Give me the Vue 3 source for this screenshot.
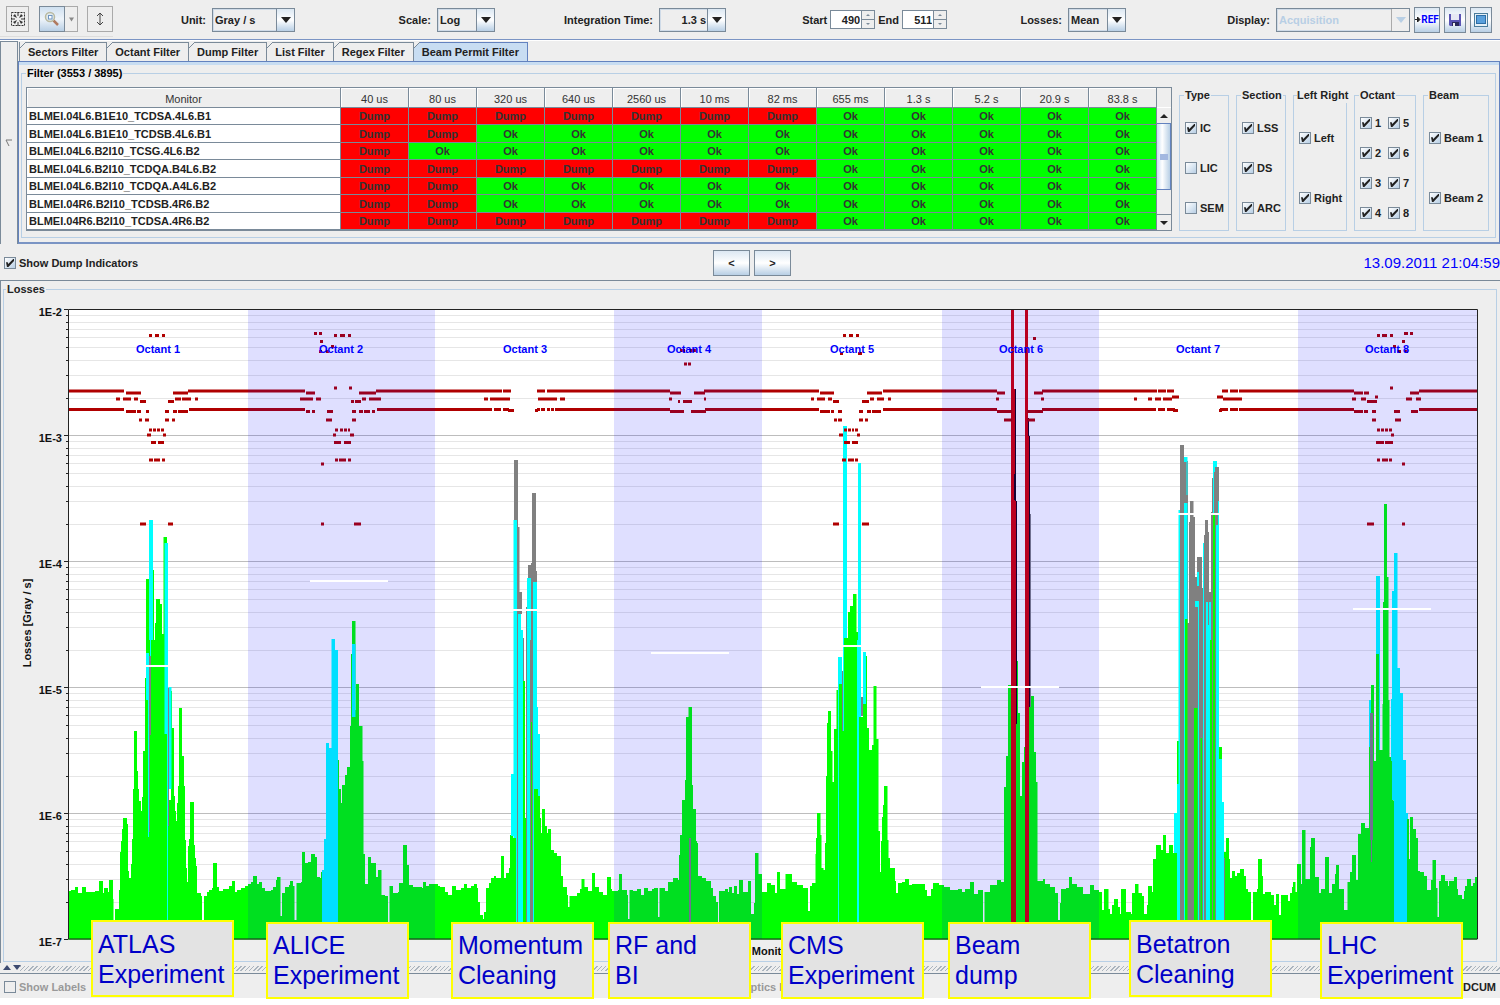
<script setup>
import { ref, computed } from 'vue'

const tabs = ['Sectors Filter', 'Octant Filter', 'Dump Filter', 'List Filter', 'Regex Filter', 'Beam Permit Filter']
const activeTab = ref('Beam Permit Filter')

const periods = ['40 us', '80 us', '320 us', '640 us', '2560 us', '10 ms', '82 ms', '655 ms', '1.3 s', '5.2 s', '20.9 s', '83.8 s']
// dumps: how many of the leading integration periods request a dump
const monitors = [
  { name: 'BLMEI.04L6.B1E10_TCDSA.4L6.B1', dumps: 7 },
  { name: 'BLMEI.04L6.B1E10_TCDSB.4L6.B1', dumps: 2 },
  { name: 'BLMEI.04L6.B2I10_TCSG.4L6.B2', dumps: 1 },
  { name: 'BLMEI.04L6.B2I10_TCDQA.B4L6.B2', dumps: 7 },
  { name: 'BLMEI.04L6.B2I10_TCDQA.A4L6.B2', dumps: 2 },
  { name: 'BLMEI.04R6.B2I10_TCDSB.4R6.B2', dumps: 2 },
  { name: 'BLMEI.04R6.B2I10_TCDSA.4R6.B2', dumps: 7 }
]

const groups = ref([
  { title: 'Type', cls: 'narrow', items: [['IC', true], ['LIC', false], ['SEM', false]] },
  { title: 'Section', cls: 'narrow', items: [['LSS', true], ['DS', true], ['ARC', true]] },
  { title: 'Left Right', cls: 'medium', items: [['Left', true], ['Right', true]] },
  { title: 'Octant', cls: 'two', items: [['1', true], ['5', true], ['2', true], ['6', true], ['3', true], ['7', true], ['4', true], ['8', true]] },
  { title: 'Beam', cls: 'wide', items: [['Beam 1', true], ['Beam 2', true]] }
])

const showDump = ref(true)
const start = ref(490)
const end = ref(511)

// ---- chart ----
const TOP = 309.5
const DECADE = 126
const BASE = TOP + DECADE * 5
const decades = [0, 1, 2, 3, 4, 5].map(i => ({ label: `1E-${i + 2}`, y: TOP + DECADE * i }))
const minors = computed(() => {
  const out = []
  for (let d = 1; d <= 5; d++) {
    for (let m = 2; m <= 9; m++) out.push(Math.round(TOP + DECADE * d - DECADE * Math.log10(m)) + 0.5)
  }
  return out
})
const bands = [[248, 435], [614, 762], [942, 1099], [1298, 1477]]
const octants = [158, 341, 525, 689, 852, 1021, 1198, 1387].map((x, i) => ({ x, name: `Octant ${i + 1}` }))

const profile = `68,891 71,890 75,887 78,893 82,887 86,892 95,891 99,881 103,893 104,888 108,892 109,880 113,899 113.5,922 115,909
119,890 120,852 121,841 122,829 123,818 127,824 128,871 129,878 131,864 132,839 133,789 134,731 137,771 138,789 139,801 141,811
142,797 143,751 145,678 146,579 149,570 154,640 155,623 156,599 160,604 162,634 163.5,537 167,687 168,800 171,691 172,728 174,796
175,811 176,821 177,803 178,786 179,708 182,756 184,786 185,840 186,868 187,882 188,846 189,839 190,802 194,845 195,858 196,866
197,893 201,896 202,922 204,896 207,892 209,890 212,888 213,863 217,887 219,891 223,889 229,886 232,881 235,892 237,890 241,888
245,886 248,884 251,882 253,876 257,884 259,882 262,888 265,891 271,890 273,887 276,880 277,877 280.5,916 282,893 285,887 289,885
290,881 293,886 294.5,920 296.5,883 301,882 302,852 305,863 308,862 311,854 315,857 317,877 320,878 321,872 323,870 338,760
339,789 341,803 342,785 345,775 347,767 350,726 351,654 352,621 355.5,710 356,684 359,726 362.5,761 363.5,854 365,884 368,857
371,863 376,877 378,870 381.5,895 385,896 388,922 389.5,886 393,893 398,892 399,883 403,845 407,865 409,885 413,887 422,888
423,882 426,886 429,884 438,886 440,887 445,892 448,895 452,886 456,890 461,888 464,884 467,888 471,886 474,884 477,888 478,902
480,915 483,919 484,912 486,888 489,883 491,878 494,876 496,878 501,856 504,878 506,873 509,868 510,835 513,838 516,838 523,681
525,818 526,790 531,722 534,789 538,796 540,818 541,833 542,809 545,826 547,833 548,829 551,850 554,853 557,856 561,876 563,887
567,895 568,907 569.5,896 577,893 580,889 581.5,879 584.5,887 588,891 592,873 595,887 599,892 603,895 607,877 611,889 612,891
618,890 619,874 622,890 627,895 628,919 629.5,890 633,891 637,889 641,895 644,888 648,891 652,889 654,888 658,917 659.5,888
665,891 668,882 673,878 678,880 679,855 680,835 682,800 685,780 686,717 688.5,707 692,785 693,809 696,841 697,843 698,876 702,878
706,881 711,888 713,896 716,902 718,922 719,891 725,889 728,892 729,887 732,893 734,886 737,894 739,880 743,892 748,881 751,914
754,903 755,853 758.5,874 762,892 767,883 771,885 775,893 777,872 780,889 785.5,874 792,882 797,885 803,888 808,911 810,886
812,883 815.5,854 816,838 817,813 820.5,835 821.5,868 823.5,870 825,843 826,776 827,723 828,711 831,751 832.5,782 834,729
836.5,690 839,684 842,731 844,638 848,612 850,606 853,594 856.5,632 858,717 863,704 866,656 867,728 869,750 872,745 873.5,686
876.5,739 878.5,831 880,872 881,841 882,817 883,805 884,786 887.5,840 888.5,858 890,868 895,881 896,893 898,883 902,882 905,879
909,885 912,884 925,890 927,896 931,889 933,883 939,885 944,887 950,890 958,889 962,892 965,889 970,882 974,894 978,890 983,922
984.5,892 990,885 997,880 1001,882 1004,787 1006,756 1008,685 1012,700 1016,661 1018,713 1020,796 1022,762 1024,747 1025,696
1034,752 1036,782 1037.5,881 1043,879 1045,884 1050,887 1055,893 1058,920 1060,903 1061,889 1066,888 1069,877 1072,884 1077,887
1083,894 1090,885 1094,890 1099,892 1102,910 1104,889 1108.5,909 1110,914 1112,905 1114,899 1118,907 1120,914 1121,889 1126,912
1131,914 1132,893 1135,884 1138.5,893 1142,896 1144,914 1147,905 1148,886 1152,892 1153,859 1156,845 1161,850 1163,835 1166,853
1169,845 1173,853 1177,741 1180,747 1218,747 1222,835 1224,852 1226,838 1229,859 1230,878 1232,871 1235,876 1237,873 1240,869
1244,876 1246,889 1248,892 1251,922 1253,892 1257,889 1258,859 1262,876 1263,894 1265,892 1271,895 1274,905 1276,894 1279,915
1281,895 1288,901 1290,893 1292,887 1293,882 1295.5,892 1297,864 1301,884 1302,830 1305.5,879 1310,847 1311,838 1315,877
1319,893 1321,889 1325,857 1329,893 1332,884 1335,874 1336,865 1339,889 1344,910 1347.5,882 1350,872 1352,855 1356,880 1358,834
1361,823 1365,828 1369,747 1371,685 1374,761 1376,654 1379,737 1380,750 1382.5,704 1383,602 1384,504 1387,577 1388.5,700
1389.5,757 1392,761 1393.5,801 1406,819 1409,859 1410,817 1413,829 1416,838 1418,871 1420,872 1424,876 1427,890 1431,880
1432.5,860 1436,888 1437.5,917 1439,881 1441,875 1445,881 1448,886 1449,881 1454,877 1457,889 1458,895 1462,899 1464,891
1465,886 1467,879 1471,886 1473,883 1475,877`
const profilePath = computed(() => {
  const pts = profile.trim().split(/\s+/).map(p => p.split(','))
  let d = `M68 ${BASE}`
  for (const [x, y] of pts) d += `H${x}V${y}`
  return `${d}H1477V${BASE}Z`
})

// [colour, x1, x2, top, bottom]; c = cyan, s = grey, g = green, r = dump red, k = black
const B = BASE
const bars = [
  ['c', 149, 153, 520, 640], ['c', 146, 149, 653, 700], ['c', 148, 149, 700, 837], ['c', 150, 151, 640, 656], ['s', 149, 151, 656, 735], ['s', 149, 150, 735, 832],
  ['c', 164.5, 168, 543, 734], ['c', 167, 168, 734, B], ['c', 169, 171.5, 687, 789], ['s', 168, 169, 688, 826],
  ['c', 322, 325, 870, B], ['c', 324, 326, 839, B], ['c', 326, 329, 743, B], ['c', 328, 332, 748, B], ['c', 331.5, 335, 639, B], ['c', 335, 338, 650, B], ['c', 352, 355.5, 644, 717],
  ['c', 511, 514, 774, 836], ['s', 514, 518, 460, B], ['c', 513.5, 517, 520, B], ['s', 517, 519.5, 527, B], ['s', 519, 522, 592, 614], ['c', 518, 521, 614, B], ['c', 520, 523, 630, B], ['s', 523, 524, 638, 681],
  ['s', 526, 527, 607, B], ['s', 528, 532, 565, 578], ['s', 531, 534, 563, B], ['s', 532, 536, 493, 582], ['s', 535, 537, 571, 582], ['c', 527, 530, 578, B], ['c', 530, 531, 578, 640], ['s', 530, 532, 640, B], ['g', 531, 532, 722, 850], ['c', 533, 537, 582, 789], ['c', 536, 538, 707, 789], ['c', 538, 540, 734, 796], ['c', 533, 534, 789, B], ['g', 512, 516, 838, B],
  ['s', 689, 691, 838, B],
  ['c', 838, 842, 657, 684], ['c', 838, 839, 684, B], ['s', 842, 843, 671, 731], ['c', 843, 847, 426, 638], ['c', 843, 844, 638, 731], ['c', 858, 861, 463, 717], ['c', 857, 859, 640, B], ['s', 861, 863, 697, 716], ['c', 863, 866, 652, 704],
  ['r', 1011, 1014, 310, B], ['r', 1014, 1016, 389, B], ['k', 1015, 1016, 389, 501], ['k', 1014, 1016, 474, 500], ['k', 1016, 1017, 501, 724],
  ['r', 1025, 1028, 310, B], ['r', 1028, 1029, 418, B], ['k', 1028, 1029, 418, 436], ['k', 1029, 1030, 436, 707], ['s', 1030, 1031, 514, 707],
  ['c', 1174, 1177, 813, 853], ['c', 1177, 1180, 784, B], ['c', 1178.5, 1181, 510, B], ['s', 1180, 1184, 445, B], ['s', 1184, 1188, 461, B], ['c', 1184, 1187, 457, 462], ['c', 1186.5, 1187.5, 457, 495], ['c', 1184, 1187.5, 503, 640], ['c', 1184, 1185, 640, B],
  ['s', 1187, 1191, 623, B], ['g', 1185, 1187.5, 619, B], ['s', 1189, 1191, 522, B], ['s', 1190, 1193.5, 501, B], ['s', 1193, 1195, 517, B], ['s', 1194, 1199, 577, B], ['s', 1197, 1202, 557, B], ['c', 1197, 1199, 572, 586], ['c', 1195, 1199, 601, 607], ['c', 1198, 1199, 607, B], ['g', 1194, 1197.5, 708, B],
  ['g', 1200.5, 1202, 738, B], ['s', 1202, 1204, 588, B], ['c', 1203, 1205, 543, B], ['s', 1204, 1206, 535, B], ['s', 1205, 1208, 520, B], ['s', 1207, 1209, 532, 602], ['s', 1209, 1211, 592, 602], ['c', 1206, 1211, 602, B], ['s', 1208, 1209, 532, 625],
  ['s', 1211, 1213, 512, B], ['s', 1212, 1214, 478, B], ['g', 1210, 1212, 640, B], ['c', 1213, 1217, 461, B], ['s', 1215, 1219, 467, 525], ['c', 1218, 1219, 501, B], ['c', 1216, 1219, 525, B], ['s', 1214, 1216, 472, B], ['g', 1213, 1215, 515, B], ['c', 1219, 1222, 759, B], ['c', 1222, 1224, 802, B], ['s', 1224, 1225, 858, B],
  ['c', 1369, 1371, 700, 747], ['s', 1370, 1373, 713, 840], ['s', 1371, 1372, 840, 862], ['c', 1376, 1380, 576, 654], ['c', 1379, 1380, 654, 750],
  ['c', 1391, 1393, 699, 761], ['c', 1392, 1394, 591, 800], ['c', 1394, 1397.5, 553, B], ['c', 1397, 1400, 668, B], ['c', 1399.5, 1403, 693, B], ['c', 1403, 1406, 760, B], ['c', 1406, 1408, 813, 819], ['c', 1406, 1407, 819, B]
]

// dump thresholds: height -> horizontal extents
const thresholds = [
  [333.5, '314-317 319-322 1404-1408 1410-1413'],
  [335.5, '149-152 155-159 162-165 334-337 340-345 348-351 843-846 849-853 856-859 1377-1380 1382-1387 1390-1393'],
  [338.5, '1033-1036'],
  [341.5, '320-323 1402-1405'],
  [346.5, '331-334 1393-1396'],
  [350.5, '680-685 690-697'],
  [351.5, '319-322 326-329 1397-1401 1405-1408'],
  [353.5, '840-843 858-862'],
  [364, '684-687 688-691'],
  [388, '334-337 349-352 1390-1393'],
  [391, '68-124 188-305 376-502 503-511 537-545 547-670 704-819 883-997 1042-1157 1158-1166 1167-1174 1222-1228 1230-1238 1239-1354 1419-1477'],
  [393, '126-141 173-188 306-315 359-376 670-681 694-705 820-834 867-882 997-1005 1034-1043 1354-1363 1364-1369 1410-1419'],
  [397, '1172-1179 1217-1223 1375-1378'],
  [399, '116-120 123-131 134-138 175-181 182-191 195-198 300-313 316-321 362-366 369-381 484-488 490-510 538-557 560-565 669-672 704-706 811-814 817-825 828-832 870-874 877-884 888-891 996-999 1041-1044 1134-1137 1148-1152 1155-1161 1163-1172 1223-1242 1352-1356 1361-1366 1406-1412 1416-1421'],
  [401.5, '140-146 168-174 351-354 355-361 678-680 683-692 833-839 862-869 1367-1377'],
  [409.5, '68-124 189-305 377-492 494-501 503-509 537-540 541-545 547-550 551-554 555-670 705-819 883-997 1042-1156 1158-1165 1167-1175 1220-1228 1230-1238 1239-1354 1419-1477'],
  [410.5, '508-514 535-538 1173-1178 1219-1222'],
  [411.5, '126-136 137-141 146-149 165-169 173-177 178-188 306-310 312-315 327-333 352-356 359-363 364-370 372-375 670-684 691-706 820-830 831-834 838-842 859-863 867-871 872-881 997-1012 1027-1043 1354-1363 1364-1368 1372-1376 1394-1400 1411-1418'],
  [420, '139-142 145-149 165-169 172-175 326-332 352-356 834-837 838-842 859-863 865-868 1004-1012 1027-1035 1372-1376 1395-1401'],
  [430, '149-152 153-156 157-160 161-164 335-338 340-343 344-347 348-350 844-847 848-851 852-854 855-858 1377-1380 1381-1384 1385-1388 1389-1392'],
  [435, '147-151 163-166 333-336 350-354 839-843 857-860 1391-1394'],
  [442.5, '151-156 158-164 334-341 344-351 844-850 852-858 1376-1384 1385-1393'],
  [460, '149-153 154-160 162-165 335-338 339-346 348-351 842-846 848-854 855-858 1377-1380 1382-1388 1389-1392'],
  [464, '321-324 1402-1405'],
  [524, '140-146 168-173 321-324 354-361 833-839 862-869 1367-1374 1402-1405']
]
const thresholdPath = computed(() =>
  thresholds.map(([y, segs]) => segs.split(' ').map(s => {
    const [a, b] = s.split('-')
    return `M${a} ${y}H${b}`
  }).join('')).join('')
)
const means = [[119, 666], [310, 581], [495, 610], [651, 653], [813, 646], [981, 687], [1159, 514], [1353, 609]]

const callouts = [
  { text: ['ATLAS', 'Experiment'], x: 91, cls: 'raised' },
  { text: ['ALICE', 'Experiment'], x: 266, cls: '' },
  { text: ['Momentum', 'Cleaning'], x: 451, cls: '' },
  { text: ['RF and', 'BI'], x: 608, cls: '' },
  { text: ['CMS', 'Experiment'], x: 781, cls: '' },
  { text: ['Beam', 'dump'], x: 948, cls: '' },
  { text: ['Betatron', 'Cleaning'], x: 1129, cls: 'raised' },
  { text: ['LHC', 'Experiment'], x: 1320, cls: '' }
]
</script>

<template>
  <div class="page">
    <header class="toolbar">
      <div class="tools">
        <button class="tool flat" aria-label="Fit to window">
          <svg width="16" height="16" viewBox="0 0 16 16"><rect x="1.5" y="1.5" width="13" height="13" fill="none" stroke="#333" stroke-dasharray="2 1" /><path d="M5 3l2 4-4-2zM11 3l-2 4 4-2zM5 13l2-4-4 2zM11 13l-2-4 4 2z" fill="#333" /><path d="M8 1v4M8 15v-4M1 8h4M15 8h-4" stroke="#333" fill="none" /></svg>
        </button>
        <div class="split">
          <button class="tool pressed" aria-label="Zoom">
            <svg width="16" height="16" viewBox="0 0 16 16"><path d="M9.5 9.5l4.500 4.500" stroke="#b07a60" stroke-width="2.500" /><circle cx="6" cy="6" r="4.500" fill="#dfe9ee" stroke="#b9b9a0" stroke-width="1.500" /><rect x="4.500" y="4.500" width="3.500" height="3.500" fill="#fff" stroke="#6f95c0" /></svg>
          </button>
          <button class="tool drop" aria-label="Zoom options"><svg width="5" height="5" viewBox="0 0 6 5"><path d="M0 0h6L3 5z" fill="#888" /></svg></button>
        </div>
        <button class="tool flat tall" aria-label="Fit vertically">
          <svg width="8" height="14" viewBox="0 0 8 14"><path d="M4 1v12M1 4l3-3 3 3M1 10l3 3 3-3" fill="none" stroke="#444" /></svg>
        </button>
      </div>
      <div class="field">
        <label for="unit">Unit:</label>
        <span class="combo w83"><select id="unit"><option>Gray / s</option></select></span>
      </div>
      <div class="field">
        <label for="scale">Scale:</label>
        <span class="combo w58"><select id="scale"><option>Log</option></select></span>
      </div>
      <div class="field">
        <label for="integration">Integration Time:</label>
        <span class="combo w67 right"><select id="integration"><option>1.3 s</option></select></span>
      </div>
      <div class="field tight">
        <label for="start">Start</label>
        <span class="spinner"><input id="start" v-model="start" type="text"><span class="arrows"><button class="up" aria-label="Increase start" @click="start++"></button><button class="down" aria-label="Decrease start" @click="start--"></button></span></span>
        <label for="end">End</label>
        <span class="spinner"><input id="end" v-model="end" type="text"><span class="arrows"><button class="up" aria-label="Increase end" @click="end++"></button><button class="down" aria-label="Decrease end" @click="end--"></button></span></span>
      </div>
      <div class="field">
        <label for="losses">Losses:</label>
        <span class="combo w58"><select id="losses"><option>Mean</option></select></span>
      </div>
      <div class="field">
        <label for="display">Display:</label>
        <span class="combo w134 off"><select id="display" disabled><option>Acquisition</option></select></span>
        <button class="tool ref"><svg width="6" height="7" viewBox="0 0 6 7"><path d="M0 3.500h3M2.500 1l2.500 2.500L2.500 6z" fill="#222" stroke="#222" /></svg>REF</button>
        <button class="tool small" aria-label="Save">
          <svg width="14" height="14" viewBox="0 0 14 14"><path d="M1 1h12v12H2l-1-1z" fill="#5a54b4" /><path d="M3 1h8v6H3z" fill="#e6e8f4" /><path d="M4 9h7v4H4z" fill="#29285a" /><path d="M5 10h2v3H5z" fill="#eee" /></svg>
        </button>
        <button class="tool small" aria-label="Full screen">
          <svg width="14" height="14" viewBox="0 0 14 14"><rect x="0.500" y="0.500" width="13" height="13" fill="#e6f0f6" stroke="#4a7c9c" /><rect x="2.500" y="2.500" width="9" height="8" fill="#5aa0dc" stroke="#2e6ea6" /></svg>
        </button>
      </div>
    </header>

    <section class="filters">
      <div class="strip"><svg width="8" height="8" viewBox="0 0 8 8"><path d="M7 1H1l3 6" fill="none" stroke="#777" /></svg></div>
      <div class="pane">
        <div class="tabs" role="tablist">
          <button v-for="t in tabs" :key="t" role="tab" class="tab" :class="{ active: t === activeTab }" :aria-selected="t === activeTab" @click="activeTab = t">{{ t }}</button>
        </div>
        <div class="tabpage">
          <fieldset class="filter">
            <legend>Filter (3553 / 3895)</legend>
            <div class="filter-row">
              <div class="scroller">
                <div class="viewport">
                  <table>
                    <thead>
                      <tr><th class="name" scope="col">Monitor</th><th v-for="p in periods" :key="p" scope="col">{{ p }}</th></tr>
                    </thead>
                    <tbody>
                      <tr v-for="m in monitors" :key="m.name">
                        <td class="name">{{ m.name }}</td>
                        <td v-for="(p, i) in periods" :key="p" :class="i < m.dumps ? 'dump' : 'ok'">{{ i < m.dumps ? 'Dump' : 'Ok' }}</td>
                      </tr>
                      <tr><td class="name"></td><td v-for="(p, i) in periods" :key="p" :class="i < 2 ? 'dump' : 'ok'"></td></tr>
                    </tbody>
                  </table>
                </div>
                <div class="scrollbar">
                  <div class="corner"></div>
                  <button class="sb up" aria-label="Scroll up"></button>
                  <div class="track"><div class="thumb"></div></div>
                  <button class="sb down" aria-label="Scroll down"></button>
                </div>
              </div>
              <fieldset v-for="g in groups" :key="g.title" class="group" :class="g.cls">
                <legend>{{ g.title }}</legend>
                <div class="checks">
                  <label v-for="item in g.items" :key="item[0]"><input v-model="item[1]" type="checkbox">{{ item[0] }}</label>
                </div>
              </fieldset>
            </div>
          </fieldset>
        </div>
      </div>
    </section>

    <section class="nav">
      <label class="check"><input v-model="showDump" type="checkbox">Show Dump Indicators</label>
      <div class="pager"><button>&lt;</button><button>&gt;</button></div>
      <time>13.09.2011 21:04:59</time>
    </section>

    <main class="main">
      <fieldset class="losses">
        <legend>Losses</legend>
        <svg class="chart" viewBox="4 297 1492 664">
          <rect x="68" y="309" width="1409" height="630" fill="#fff" />
          <path v-for="y in minors" :key="y" :d="`M68 ${y}H1477`" stroke="#e6e6e6" />
          <path v-for="d in decades" :key="d.label" :d="`M68 ${d.y}H1477`" stroke="#bdbdbd" />
          <path :d="profilePath" fill="#00ff00" />
          <rect v-for="(b, i) in bars" :key="i" :class="b[0]" :x="b[1]" :y="b[3]" :width="b[2] - b[1]" :height="b[4] - b[3]" />
          <path :d="thresholdPath" stroke="#b00000" stroke-width="3" />
          <rect v-for="b in bands" :key="b[0]" :x="b[0]" y="310" :width="b[1] - b[0]" height="629" fill="#0000ff" fill-opacity="0.125" />
          <path v-for="m in means" :key="m[0]" :d="`M${m[0]} ${m[1]}h78`" stroke="#fff" stroke-width="2" />
          <text v-for="o in octants" :key="o.name" class="octant" :x="o.x" y="353" text-anchor="middle">{{ o.name }}</text>
          <path d="M68.500 309.500H1477.500V939H68.500Z" fill="none" stroke="#222" />
          <path v-for="y in minors" :key="y" :d="`M66 ${y}h2`" stroke="#222" />
          <g v-for="d in decades" :key="d.label">
            <path :d="`M64 ${d.y}h4`" stroke="#222" />
            <text class="axis" x="62" :y="d.y + 6" text-anchor="end">{{ d.label }}</text>
          </g>
          <text class="axis" transform="translate(31 623) rotate(-90)" text-anchor="middle">Losses [Gray / s]</text>
          <text class="axis" x="772" y="955" text-anchor="middle">Monitor</text>
        </svg>
      </fieldset>
    </main>

    <div class="splitter">
      <svg width="18" height="8" viewBox="0 0 18 8"><path d="M0 6h8L4 1z" fill="#3c4a70" /><path d="M10 1h8l-4 5z" fill="#3c4a70" /></svg>
    </div>
    <footer class="footer">
      <label class="check"><input type="checkbox" disabled>Show Labels</label>
      <span class="optics">Optics E</span>
      <span class="dcum">DCUM</span>
    </footer>

    <div v-for="c in callouts" :key="c.x" class="callout" :class="c.cls" :style="{ left: c.x / 15 + '%' }">
      <div v-for="l in c.text" :key="l">{{ l }}</div>
    </div>
  </div>
</template>

<style>
body { margin: 0; background: #fff; }
</style>

<style scoped>
.page { position: relative; border-bottom: 7px solid #fff; background: #eee; color: #222; font: bold 11px/16px 'Liberation Sans', Arial, sans-serif; white-space: nowrap; }
.page * { box-sizing: border-box; }
button, input, select { font: inherit; color: inherit; margin: 0; padding: 0; border-radius: 0; }
fieldset { margin: 0; min-width: 0; border: 1px solid #b8cfe5; padding: 0; }
legend { padding: 0 1px; margin-left: 4px; height: 16px; }

.toolbar { display: grid; grid-template-columns: 113px 182fr 200fr 231fr 221fr 179fr 366fr; align-items: center; height: 40px; padding-right: 8px; border-bottom: 1px solid #7a94c4; }
.tools { display: flex; align-items: center; gap: 10px; padding-left: 6px; height: 35px; border-bottom: 1px solid #ddd; }
.tool { display: flex; align-items: center; justify-content: center; border: 1px solid #7a8a99; background: linear-gradient(#dce8f3, #fff 50%, #b8cfe5); height: 26px; }
.tool.flat { width: 24px; border-color: #aaa; background: #eee; }
.tool.flat.tall { width: 27px; margin-left: -1px; }
.split { display: flex; }
.tool.pressed { width: 26px; background: linear-gradient(#cfe0f0, #eef4fa 50%, #b8cfe5); }
.tool.drop { width: 13px; border-color: #aaa; border-left: 0; background: #eee; }
.tool.ref { width: 26px; font: bold 10px/16px Roboto, 'Liberation Sans', sans-serif; color: #00f; }
.tool.small { width: 22px; }
.field { display: flex; align-items: center; justify-content: flex-end; gap: 4px; }
.field > label { margin-right: 2px; }
.field.tight { gap: 3px; }
.field.tight > label { margin-right: 0; }
.combo { position: relative; height: 24px; display: flex; }
.combo select { appearance: none; width: 100%; height: 24px; border: 1px solid #7a8a99; background: #eee; padding: 0 19px 0 2px; box-shadow: inset 0 0 0 1px #cfdbe8; }
.combo.right select { text-align-last: right; }
.combo::after { content: ''; position: absolute; right: 1px; top: 1px; bottom: 1px; width: 17px; border-left: 1px solid #7a8a99; background: linear-gradient(#dce8f3, #fff 50%, #b8cfe5); pointer-events: none; }
.combo::before { content: ''; position: absolute; z-index: 1; right: 4px; top: 9px; border: 5px solid transparent; border-top: 6px solid #222; border-bottom: 0; pointer-events: none; }
.combo.off select { color: #b8cfe5; opacity: 1; }
.combo.off::after { background: #eee; border-color: #aaa; }
.combo.off::before { border-top-color: #b8cfe5; }
.w83 { width: 83px; } .w58 { width: 58px; } .w67 { width: 67px; } .w134 { width: 134px; }
.spinner { display: flex; height: 19px; border: 1px solid #7a8a99; }
.spinner input { width: 30px; border: 0; background: #fff; text-align: right; padding-right: 1px; }
.arrows { display: flex; flex-direction: column; width: 13px; border-left: 1px solid #7a8a99; }
.arrows button { flex: 1; position: relative; border: 0; background: #eee; }
.arrows .up { border-bottom: 1px solid #7a8a99; }
.arrows button::before { content: ''; position: absolute; left: 4px; top: 3px; border: 2px solid transparent; }
.arrows .up::before { border-bottom: 2px solid #7a8a99; border-top: 0; }
.arrows .down::before { border-top: 2px solid #7a8a99; border-bottom: 0; }

.filters { display: flex; border-top: 1px solid #fff; }
.strip { width: 18px; border: 1px solid #7a8a99; border-bottom: 0; display: flex; align-items: center; padding-left: 4px; }
.pane { flex: 1; min-width: 0; padding-top: 1px; }
.tabs { display: flex; padding-left: 1px; }
.tab { position: relative; height: 19px; padding: 0 8px; border: 1px solid #7a8a99; border-left-width: 0; border-bottom: 0; background: #eee; }
.tab::before { content: ''; position: absolute; left: 0; top: -1px; width: 6px; height: 6px; background: linear-gradient(135deg, #eee 46%, #7a8a99 46%, #7a8a99 58%, transparent 58%); }
.tab:first-child { border-left-width: 1px; }
.tab.active { background: #c8ddf2; border-color: #6382bf; }
.tabpage { border: 1px solid #6382bf; border-bottom: 2px solid #7a94c4; padding: 3px 3px 4px 2px; background: linear-gradient(#c8ddf2, #c8ddf2) top / 100% 3px no-repeat; }
.filter { padding: 6px 6px 6px 4px; }
.filter > legend { color: #000; margin-left: 0; }
.filter-row { display: flex; gap: 7px; }
.scroller { flex: 1; min-width: 0; height: 144px; display: flex; border: 1px solid #7a8a99; }
.viewport { flex: 1; min-width: 0; overflow: hidden; }
table { width: 100%; table-layout: fixed; border-collapse: separate; border-spacing: 0; }
th, td { padding: 0; text-align: center; border-right: 1px solid #7a8a99; border-bottom: 1px solid #7a8a99; overflow: hidden; line-height: 16px; color: #333; }
th { height: 20px; padding-top: 2px; font-weight: normal; box-shadow: inset 1px 1px #fff; }
.name { width: 314px; }
td { height: 17px; }
tr:nth-child(even) td { height: 18px; }
td.name { background: #fff; text-align: left; padding-left: 2px; color: #222; }
td.dump { background: #f00; }
td.ok { background: #0f0; }
.scrollbar { width: 14px; display: flex; flex-direction: column; }
.corner { height: 20px; border-bottom: 1px solid #fff; }
.sb { position: relative; height: 15px; border: 0; background: #eee; }
.sb::before { content: ''; position: absolute; left: 3px; top: 6px; border: 4px solid transparent; }
.sb.up::before { border-bottom: 4px solid #222; border-top: 0; }
.sb.down::before { border-top: 4px solid #222; border-bottom: 0; }
.track { flex: 1; border-bottom: 1px solid #7a8a99; }
.thumb { height: 67px; border: 1px solid #6382bf; border-left-width: 0; background: linear-gradient(#a3b8e0, #a3b8e0) center / 8px 6px no-repeat, linear-gradient(90deg, #c8ddf2, #fff 40%, #b8cfe5); }
.group { height: 144px; }
.group.narrow { width: 50px; }
.group.medium { width: 54px; }
.group.two { width: 62px; }
.group.wide { width: 66px; }
.group.medium > legend { margin-left: 3px; padding: 0; }
.checks { display: grid; grid-auto-rows: 1fr; align-items: center; height: 120px; margin: 5px 0 0 5px; }
.two .checks { grid-template-columns: 28px 28px; }
.checks label, .check { display: flex; align-items: center; gap: 3px; }
input[type='checkbox'] { appearance: none; flex: none; position: relative; width: 12px; height: 12px; border: 1px solid #7a8a99; background: linear-gradient(135deg, #fff, #b8cfe5); }
input[type='checkbox']:checked::before { content: ''; position: absolute; inset: 1px; background: #222; clip-path: polygon(0 40%, 22% 40%, 28% 62%, 90% 0, 100% 0, 100% 24%, 30% 100%, 12% 100%); }
input[type='checkbox']:disabled { background: #eee; }

.nav { display: grid; grid-template-columns: 1fr auto 1fr; align-items: center; height: 36px; padding: 2px 0 0 4px; }
.pager { display: flex; gap: 4px; }
.pager button { width: 37px; height: 26px; border: 1px solid #7a8a99; background: linear-gradient(#dce8f3, #fff 50%, #b8cfe5); }
time { justify-self: end; color: #00f; font: 15px/18px 'Liberation Sans', Arial, sans-serif; }
.main { border-top: 1px solid #7a8a99; border-left: 1px solid #7a8a99; padding: 0 3px 1px 2px; }
.losses > legend { margin-left: 2px; }
.chart { display: block; width: 100%; height: auto; }
.chart text { font: bold 11px 'Liberation Sans', Arial, sans-serif; }
.octant { fill: #00f; }
.axis { fill: #111; }
.c { fill: #0ff; } .s { fill: #808080; } .g { fill: #0f0; } .r { fill: #d40000; } .k { fill: #180018; }
.splitter { height: 11px; padding: 1px 0 0 3px; border-bottom: 1px solid #7a8a99; background: repeating-linear-gradient(135deg, #aab4be 0 1px, #eee 1px 3px) 20px 3px / 100% 5px no-repeat; }
.splitter svg { display: block; }
.footer { display: grid; grid-template-columns: calc(50% - 8px) 1fr auto; align-items: center; height: 24px; padding: 2px 4px 0; }
.footer .check, .optics { color: #999; }
.callout { position: absolute; bottom: -1px; width: 143px; height: 77px; padding: 6px 0 0 5px; border: 2px solid #ff0; background: #e3e3e3; color: #0000c8; font: 25px/30px 'Liberation Sans', Arial, sans-serif; }
.callout.raised { bottom: 1px; padding-top: 7px; }
</style>
